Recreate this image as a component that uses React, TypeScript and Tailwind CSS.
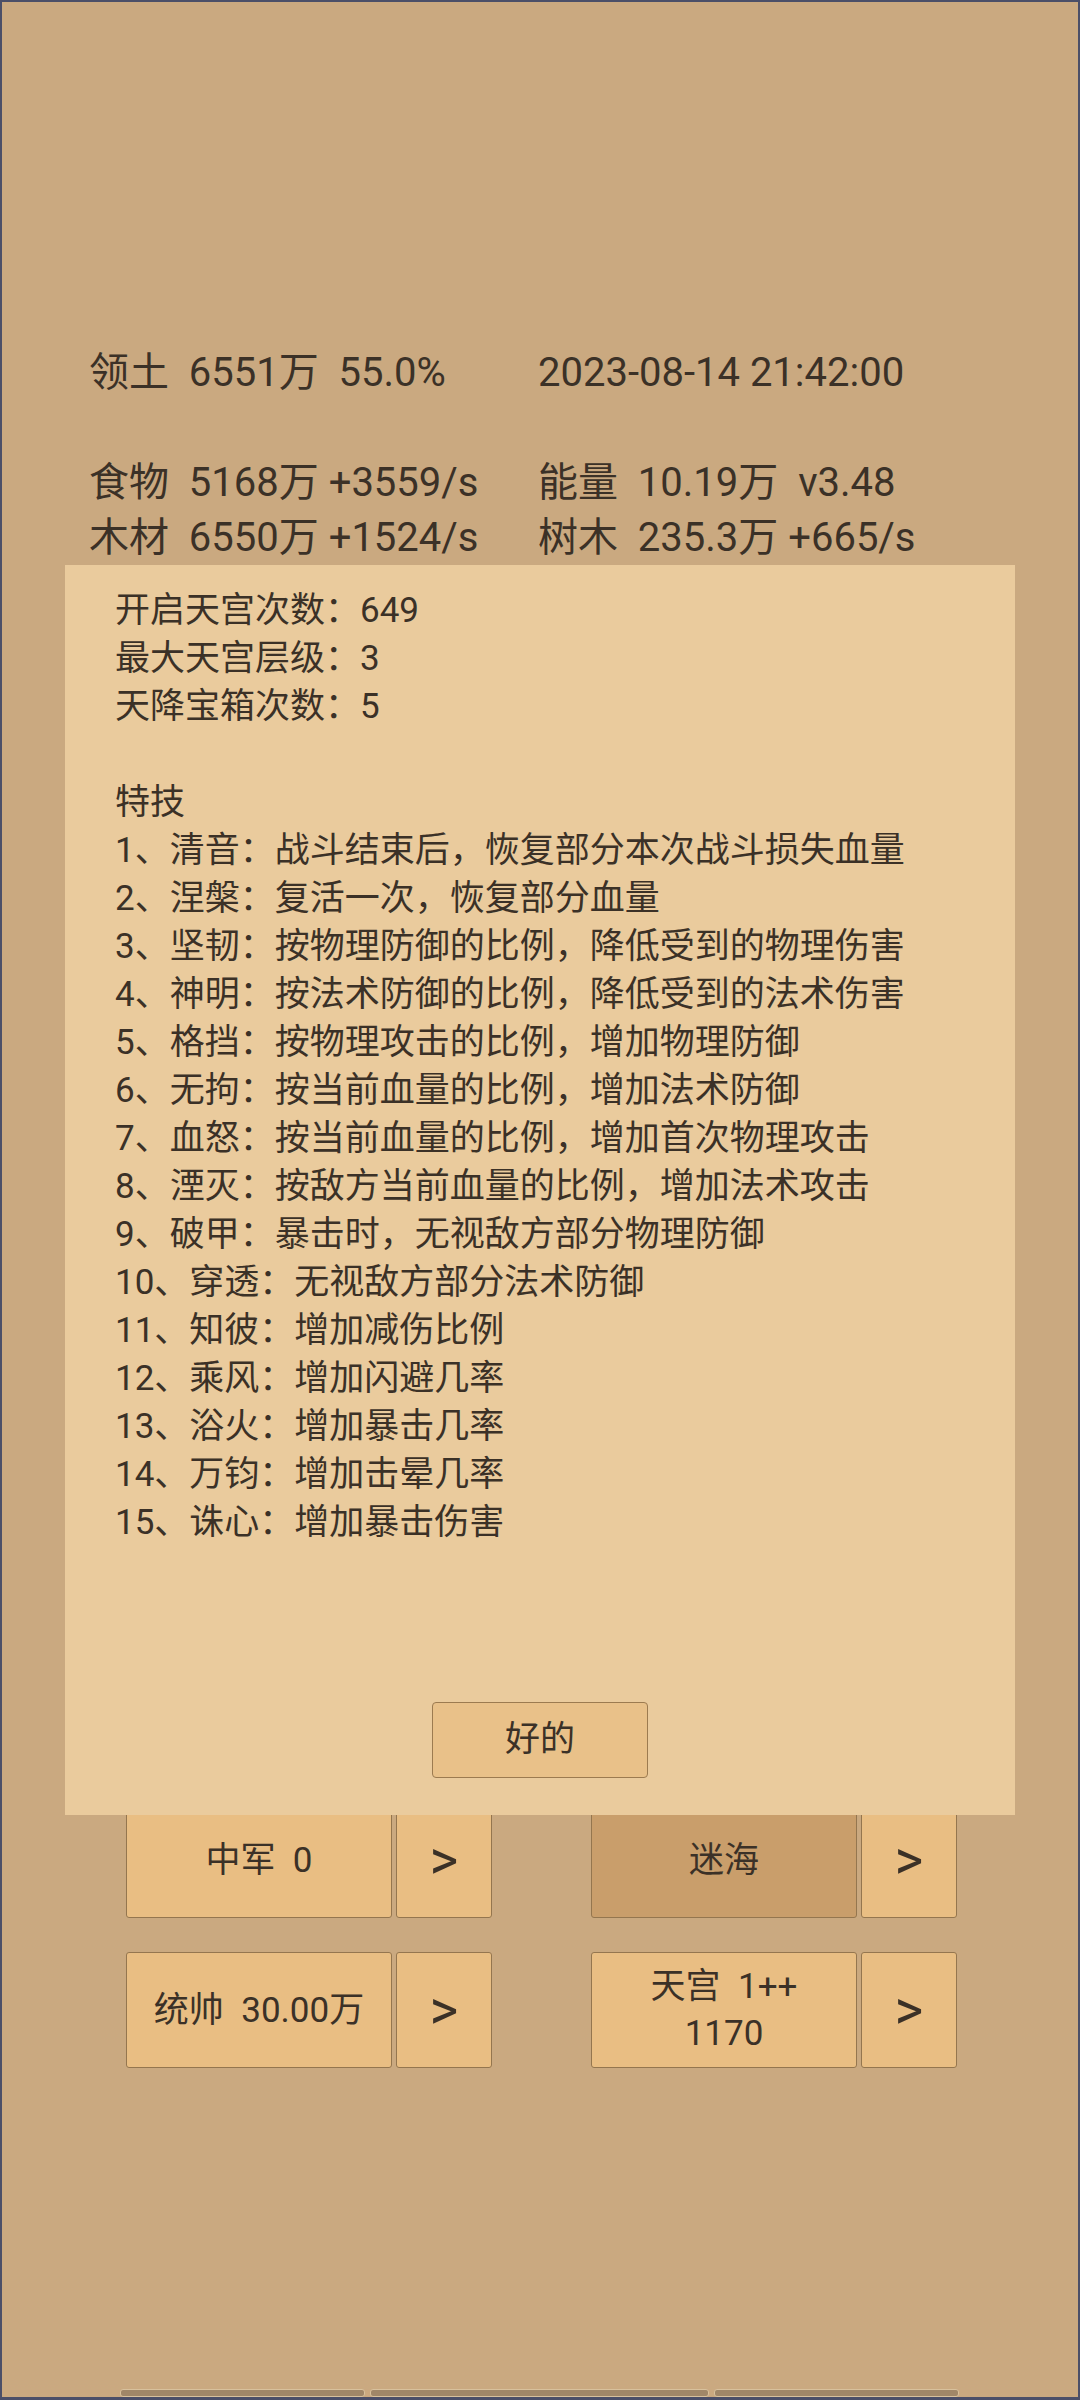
import React from 'react';

type Cell = { left: string; right: string };

const header: Cell[] = [
  { left: '领土  6551万  55.0%', right: '2023-08-14 21:42:00' },
  { left: '', right: '' },
  { left: '食物  5168万 +3559/s', right: '能量  10.19万  v3.48' },
  { left: '木材  6550万 +1524/s', right: '树木  235.3万 +665/s' },
];

const skills = [
  '1、清音：战斗结束后，恢复部分本次战斗损失血量',
  '2、涅槃：复活一次，恢复部分血量',
  '3、坚韧：按物理防御的比例，降低受到的物理伤害',
  '4、神明：按法术防御的比例，降低受到的法术伤害',
  '5、格挡：按物理攻击的比例，增加物理防御',
  '6、无拘：按当前血量的比例，增加法术防御',
  '7、血怒：按当前血量的比例，增加首次物理攻击',
  '8、湮灭：按敌方当前血量的比例，增加法术攻击',
  '9、破甲：暴击时，无视敌方部分物理防御',
  '10、穿透：无视敌方部分法术防御',
  '11、知彼：增加减伤比例',
  '12、乘风：增加闪避几率',
  '13、浴火：增加暴击几率',
  '14、万钧：增加击晕几率',
  '15、诛心：增加暴击伤害',
];

const lines = [
  '开启天宫次数：649',
  '最大天宫层级：3',
  '天降宝箱次数：5',
  '',
  '特技',
  ...skills,
];

const btn =
  'h-[116px] flex flex-col items-center justify-center border border-[#94764f] rounded-[3px] text-[35px] leading-[47px] whitespace-pre';

function ActionPair({ label, dark }: { label: React.ReactNode; dark?: boolean }) {
  return (
    <div className="flex gap-[4px]">
      <div className={btn + ' w-[266px] ' + (dark ? 'bg-[#c99e6b]' : 'bg-[#e9be83]')}>{label}</div>
      <div className={btn + ' w-[96px] bg-[#e9be83]'}>
        <span className="text-[55px] leading-none">&gt;</span>
      </div>
    </div>
  );
}

export default function App() {
  return (
    <div className="relative w-[1080px] h-[2400px] flex flex-col bg-[#caa980] border-2 border-b-[3px] border-[#4b4f68] text-[#3b3127] font-[Roboto,'Noto_Sans_CJK_SC',sans-serif]">
      {/* resource header */}
      <div className="pt-[343px] pl-[87px] grid grid-cols-[449px_1fr] text-[40px] leading-[55px] whitespace-pre">
        {header.map((row, i) => (
          <React.Fragment key={i}>
            <div className="h-[55px]">{row.left}</div>
            <div className="h-[55px]">{row.right}</div>
          </React.Fragment>
        ))}
      </div>

      {/* action buttons */}
      <div className="mt-[1237px] flex flex-col gap-[34px] pl-[124px]">
        <div className="flex gap-[99px]">
          <ActionPair label="中军  0" />
          <ActionPair label="迷海" dark />
        </div>
        <div className="flex gap-[99px]">
          <ActionPair label="统帅  30.00万" />
          <ActionPair
            label={
              <>
                <span>天宫  1++</span>
                <span>1170</span>
              </>
            }
          />
        </div>
      </div>

      {/* bottom tabs */}
      <div className="mt-auto flex gap-[5px] pl-[118px]">
        <div className="w-[245px] h-[8px] rounded-[3px] bg-[#a08768] border border-[#d8c19c]" />
        <div className="w-[339px] h-[8px] rounded-[3px] bg-[#a08768] border border-[#d8c19c]" />
        <div className="w-[245px] h-[8px] rounded-[3px] bg-[#a08768] border border-[#d8c19c]" />
      </div>

      {/* info dialog */}
      <div className="absolute top-[563px] left-[63px] w-[950px] h-[1250px] bg-[#eacb9d] flex flex-col">
        <div className="pt-[22px] pl-[50px] text-[35px] leading-[48px]">
          {lines.map((l, i) => (
            <div key={i} className="h-[48px] whitespace-pre">
              {l}
            </div>
          ))}
        </div>
        <button className="mt-auto mb-[37px] self-center w-[216px] h-[76px] bg-[#e9c189] border border-[#9c7b50] rounded-[4px] text-[35px] text-[#3b3127]">
          好的
        </button>
      </div>
    </div>
  );
}
